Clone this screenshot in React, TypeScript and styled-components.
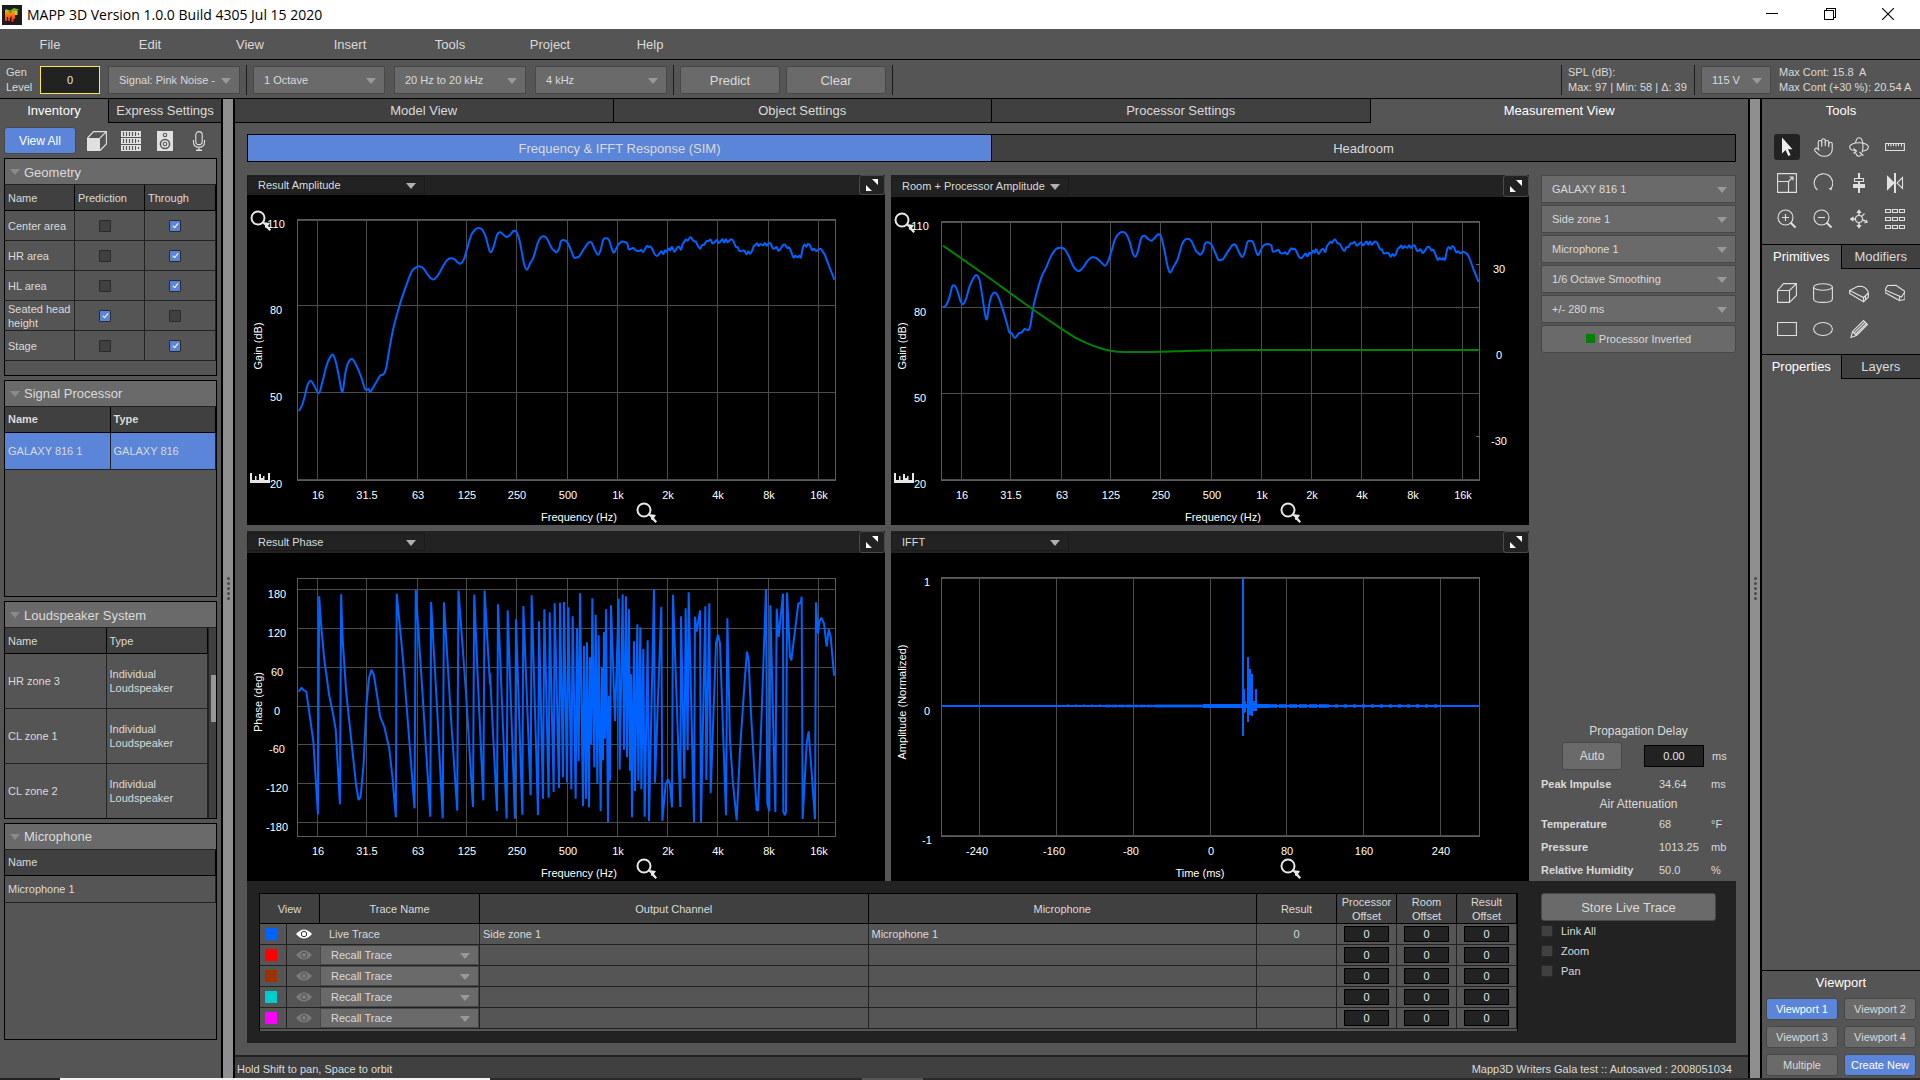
import React from "react";
import styled, { createGlobalStyle, css } from "styled-components";
import { Hand } from "lucide-react";

/* ---------- theme ---------- */

const c = {
  panel: "#555555",
  dark: "#404040",
  darker: "#222222",
  raised: "#6a6a6a",
  edge: "#484848",
  text: "#dadada",
  blue: "#5a85d8",
  trace: "#0062ff",
  grid: "#4c4c4c",
};

const GlobalStyle = createGlobalStyle`
  *, *::before, *::after { box-sizing: border-box; }
  body { margin: 0; background: ${c.panel}; }
  body, button, input, select, table {
    font-family: "Liberation Sans", Arial, Helvetica, sans-serif;
    font-size: 11px;
    color: ${c.text};
  }
  button, input, select { margin: 0; padding: 0; outline: none; }
`;

const Shell = styled.div`
  display: flex;
  flex-direction: column;
  height: 100vh;
  min-height: 760px;
  overflow: hidden;
`;

/* ---------- shared controls ---------- */

const Button = styled.button<{ $active?: boolean; $size?: number; $w?: string; $h?: number }>`
  width: ${(p) => p.$w ?? "auto"};
  height: ${(p) => p.$h ?? 28}px;
  border: 1px solid ${c.edge};
  border-radius: 3px;
  background: ${(p) => (p.$active ? c.blue : c.raised)};
  color: ${(p) => (p.$active ? "#fff" : c.text)};
  font-size: ${(p) => p.$size ?? 13}px;
  white-space: nowrap;
`;

const SelectWrap = styled.div<{ $w: string; $h: number; $flat?: boolean }>`
  position: relative;
  width: ${(p) => p.$w};
  height: ${(p) => p.$h}px;
  &::after {
    content: "";
    position: absolute;
    right: 9px;
    top: 50%;
    margin-top: -2px;
    border: 5px solid transparent;
    border-top: 6px solid ${(p) => (p.$flat ? "#b0b0b0" : "#999")};
    border-bottom: 0;
    pointer-events: none;
  }
`;

const SelectBox = styled.select<{ $flat?: boolean }>`
  appearance: none;
  display: block;
  width: 100%;
  height: 100%;
  padding: 0 20px 0 10px;
  border: 1px solid ${(p) => (p.$flat ? "#1b1b1b" : c.edge)};
  border-radius: 0;
  background: ${(p) => (p.$flat ? c.darker : c.raised)};
  color: ${c.text};
`;

function Select(props: { label: string; value: string; w?: string; h?: number; flat?: boolean }) {
  return (
    <SelectWrap $w={props.w ?? "100%"} $h={props.h ?? 28} $flat={props.flat}>
      <SelectBox aria-label={props.label} $flat={props.flat} defaultValue={props.value}>
        <option>{props.value}</option>
      </SelectBox>
    </SelectWrap>
  );
}

const NumberBox = styled.input<{ $w: number; $h: number; $focus?: boolean }>`
  display: block;
  width: ${(p) => p.$w}px;
  height: ${(p) => p.$h}px;
  border: 1px solid ${(p) => (p.$focus ? "#ffe84a" : "#000")};
  background: ${c.darker};
  color: #e6e6e6;
  text-align: center;
`;

const Check = styled.input.attrs({ type: "checkbox" })`
  appearance: none;
  display: block;
  flex: none;
  width: 12px;
  height: 12px;
  border: 1px solid #2a2a2a;
  border-radius: 1px;
  background: ${c.dark};
  &:checked { background: ${c.blue}; }
  &:checked::after {
    content: "";
    display: block;
    width: 3px;
    height: 6px;
    margin: 1px 0 0 4px;
    border: solid #fff;
    border-width: 0 1px 1px 0;
    transform: rotate(40deg);
  }
`;

const IconButton = styled.button<{ $w: number; $h: number; $on?: boolean }>`
  display: flex;
  align-items: center;
  justify-content: center;
  width: ${(p) => p.$w}px;
  height: ${(p) => p.$h}px;
  border: 0;
  border-radius: 3px;
  background: ${(p) => (p.$on ? c.darker : "transparent")};
  color: #e0e0e0;
`;

const Gap = styled.div<{ $w: number }>`
  flex: 0 0 ${(p) => p.$w}px;
`;

/* ---------- title bar, menu, toolbar ---------- */

const TitleBar = styled.header`
  display: flex;
  align-items: center;
  gap: 5px;
  flex: none;
  height: 29px;
  padding: 0 3px 0 2px;
  background: #fff;
`;

const Title = styled.h1`
  flex: 1;
  margin: 0;
  font: 400 14px/20px "Open Sans", "Noto Sans", sans-serif;
  color: #000;
`;

const WindowButton = styled.button`
  width: 58px;
  height: 28px;
  border: 0;
  background: none;
  color: #000;
`;

const MenuBar = styled.nav`
  display: flex;
  flex: none;
  height: 31px;
  border-bottom: 1px solid #000;
`;

const MenuItem = styled.button`
  width: 100px;
  border: 0;
  background: none;
  font-size: 13px;
`;

const Toolbar = styled.div`
  display: flex;
  align-items: flex-start;
  flex: none;
  height: 39px;
  padding: 6px 8px 0 6px;
  border-bottom: 1px solid #000;
`;

const Row = styled.div<{ $gap: number }>`
  display: flex;
  gap: ${(p) => p.$gap}px;
`;

const Separator = styled.div`
  width: 1px;
  height: 30px;
  margin: -1px 6px 0;
  background: #1a1a1a;
`;

const TwoLines = styled.div<{ $w: number }>`
  width: ${(p) => p.$w}px;
  margin-top: -1px;
  line-height: 15px;
  white-space: pre;
`;

const Spring = styled.div`
  flex: 1;
`;

/* ---------- body skeleton ---------- */

const Body = styled.div`
  display: grid;
  grid-template-columns: 221px 14px minmax(0, 1fr) 14px 158px;
  flex: 1;
  min-height: 0;
`;

const Splitter = styled.div`
  display: flex;
  flex-direction: column;
  align-items: center;
  justify-content: center;
  gap: 2px;
  border: solid #000;
  border-width: 0 2px;
  background: #8f8f8f;
`;

const Dot = styled.i`
  width: 3px;
  height: 3px;
  border-radius: 2px;
  background: #4a4a4a;
`;

const Tabs = styled.div<{ $topLine?: boolean }>`
  display: flex;
  flex: none;
  height: ${(p) => (p.$topLine ? 25 : 24)}px;
  ${(p) => p.$topLine && "border-top: 1px solid #000;"}
`;

const Tab = styled.button<{ $on?: boolean; $w?: string; $side?: "left" | "right" }>`
  flex: ${(p) => (p.$w ? `0 0 ${p.$w}` : "1 1 0")};
  min-width: 0;
  border: 0;
  background: transparent;
  color: #fff;
  font-size: 13px;
  white-space: nowrap;
  ${(p) =>
    p.$on
      ? "padding-bottom: 1px;"
      : css`
          border-bottom: 1px solid #000;
          border-${p.$side ?? "left"}: 1px solid #000;
          background: ${c.dark};
          color: ${c.text};
        `}
`;

/* ---------- left panel ---------- */

const Side = styled.aside`
  display: flex;
  flex-direction: column;
  min-width: 0;
  min-height: 0;
`;

const FilterRow = styled.div`
  display: flex;
  align-items: center;
  flex: none;
  padding: 4px 4px;
`;

const PanelStack = styled.div`
  display: flex;
  flex-direction: column;
  gap: 4px;
  flex: 1;
  min-height: 0;
  padding: 0 4px 38px;
`;

const Panel = styled.section`
  display: flex;
  flex-direction: column;
  flex: 1 1 0;
  min-height: 0;
  overflow: hidden;
  border: 1px solid #000;
`;

const PanelTitle = styled.h2`
  display: flex;
  align-items: center;
  gap: 4px;
  flex: none;
  height: 26px;
  margin: 0;
  padding: 1px 0 0 5px;
  border-bottom: 1px solid ${c.darker};
  background: ${c.raised};
  font-size: 13px;
  font-weight: 400;
  &::before {
    content: "";
    border: 5px solid transparent;
    border-top: 6px solid #8a8a8a;
    border-bottom: 0;
  }
`;

const PanelBody = styled.div`
  display: flex;
  align-items: flex-start;
  flex: 1;
  min-height: 0;
  overflow: hidden;
`;

const ListTable = styled.table<{ $row: number; $bold?: boolean }>`
  flex: 1;
  width: 100%;
  border-collapse: separate;
  border-spacing: 0;
  table-layout: fixed;
  th, td {
    padding: 0 3px;
    text-align: left;
    line-height: 14px;
    border: solid ${c.darker};
    border-width: 0 1px 1px 0;
  }
  th {
    height: 26px;
    background: ${c.dark};
    border-color: #000;
    font-weight: ${(p) => (p.$bold ? 700 : 400)};
  }
  td { height: ${(p) => p.$row}px; }
  tr[aria-selected="true"] td { background: ${c.blue}; }
`;

const CheckCell = styled.td`
  && { padding: 0 0 0 24px; }
`;

const ScrollTrack = styled.div`
  display: flex;
  flex-direction: column;
  align-self: stretch;
  width: 8px;
  padding: 47px 0 0 2px;
  background: ${c.dark};
  border-left: 1px solid ${c.darker};
`;

const ScrollThumb = styled.div`
  height: 47px;
  background: #999;
`;

/* ---------- centre ---------- */

const Center = styled.main`
  display: flex;
  flex-direction: column;
  min-width: 0;
  min-height: 0;
`;

const Content = styled.div`
  display: flex;
  flex-direction: column;
  flex: 1;
  min-height: 0;
  padding: 11px 12px 12px;
`;

const SubTabs = styled.div`
  display: flex;
  flex: none;
  height: 28px;
  margin-bottom: 13px;
  border: 1px solid #000;
`;

const SubTab = styled.button<{ $on?: boolean }>`
  flex: 1;
  border: 0;
  border-right: ${(p) => (p.$on ? "1px solid #000" : "0")};
  background: ${(p) => (p.$on ? c.blue : c.dark)};
  font-size: 13px;
`;

const Workspace = styled.div`
  display: grid;
  grid-template-columns: minmax(0, 1fr) 195px;
  gap: 12px;
  flex: 1;
  min-height: 0;
`;

const Charts = styled.div`
  display: grid;
  grid-template: minmax(0, 1fr) minmax(0, 1fr) / minmax(0, 1fr) minmax(0, 1fr);
  gap: 6px;
  min-height: 0;
`;

const ChartCard = styled.section`
  display: flex;
  flex-direction: column;
  min-width: 0;
  min-height: 0;
  background: #000;
`;

const ChartHead = styled.div<{ $h: number }>`
  display: flex;
  align-items: center;
  justify-content: space-between;
  flex: none;
  height: ${(p) => p.$h}px;
  background: ${c.darker};
`;

const Expand = styled.button`
  display: flex;
  align-items: center;
  justify-content: center;
  width: 26px;
  height: 100%;
  border: 1px solid #4a4a4a;
  border-radius: 3px;
  background: ${c.darker};
`;

const Plot = styled.svg`
  display: block;
  flex: 1;
  width: 100%;
  min-height: 0;
  text {
    fill: #fff;
    font-size: 11px;
    text-anchor: middle;
  }
`;

const Settings = styled.div`
  display: flex;
  flex-direction: column;
  gap: 2px;
  min-height: 0;
`;

const Swatch = styled.i<{ $color: string; $size?: number }>`
  display: inline-block;
  width: ${(p) => p.$size ?? 9}px;
  height: ${(p) => p.$size ?? 9}px;
  background: ${(p) => p.$color};
`;

const SettingLabel = styled.span`
  display: inline-flex;
  align-items: center;
  gap: 4px;
`;

const Delay = styled.div`
  display: flex;
  flex-direction: column;
  margin-top: auto;
`;

const DelayTitle = styled.div<{ $h: number }>`
  height: ${(p) => p.$h}px;
  font-size: 12px;
  line-height: ${(p) => p.$h}px;
  text-align: center;
`;

const DelayControls = styled.div`
  display: flex;
  align-items: center;
  padding-left: 21px;
`;

const DelayInput = styled.label`
  display: flex;
  align-items: center;
  gap: 8px;
  margin-left: 22px;
`;

const Reading = styled.div<{ $h: number }>`
  display: grid;
  grid-template-columns: 118px 52px 1fr;
  align-items: center;
  height: ${(p) => p.$h}px;
  padding-top: 1px;
`;

const TracePanel = styled.section`
  display: grid;
  grid-template-columns: minmax(0, 1fr) 195px;
  gap: 23px;
  align-items: start;
  flex: none;
  height: 162px;
  padding: 12px 0 0 12px;
  background: ${c.darker};
`;

const TraceFrame = styled.div`
  height: 138px;
  border: 1px solid #000;
  border-bottom: 0;
  background: linear-gradient(${c.panel}, ${c.panel}) 0 0 / 100% 137px no-repeat;
`;

const TraceTable = styled.table`
  width: 100%;
  border-collapse: separate;
  border-spacing: 0;
  table-layout: fixed;
  th, td {
    padding: 0;
    border: solid ${c.darker};
    border-width: 0 1px 1px 0;
  }
  th {
    height: 30px;
    border-color: #000;
    background: ${c.dark};
    font-weight: 400;
    line-height: 14px;
  }
  td { height: 21px; }
`;

const Td = styled.td<{ $pad?: number; $center?: boolean; $open?: boolean }>`
  && {
    padding-left: ${(p) => p.$pad ?? 0}px;
    text-align: ${(p) => (p.$center ? "center" : "left")};
    ${(p) => p.$open && "border-right: 0;"}
  }
  & > svg, & > i { display: block; }
  & > input { margin: 0 auto; }
`;

const Options = styled.div`
  display: flex;
  flex-direction: column;
  align-items: flex-start;
`;

const Option = styled.label`
  display: flex;
  align-items: center;
  gap: 8px;
  height: 20px;
`;

const StatusBar = styled.footer`
  display: flex;
  align-items: center;
  justify-content: space-between;
  flex: none;
  height: 23px;
  padding: 3px 16px 0 2px;
  border-top: 2px solid ${c.darker};
  background: ${c.dark};
`;

const ScreenEdge = styled.div`
  flex: none;
  height: 2px;
  background: linear-gradient(
    90deg,
    ${c.darker} 60px,
    #f4f4f4 60px 490px,
    #2a2a2a 490px 862px,
    ${c.panel} 862px 923px,
    #2a2a2a 923px
  );
`;

/* ---------- right panel ---------- */

const SideTitle = styled.h2`
  margin: 0;
  color: #fff;
  font-size: 13px;
  font-weight: 400;
  line-height: 24px;
  text-align: center;
`;

const IconGrid = styled.div`
  display: grid;
  grid-template-columns: repeat(4, 36px);
  grid-auto-rows: 36px;
  place-items: center;
  justify-content: center;
  padding: 6px 0 7px;
`;

const ViewportBox = styled.section`
  margin-top: auto;
  padding: 0 4px 2px;
  border-top: 1px solid #000;
`;

const ViewportGrid = styled.div`
  display: grid;
  grid-template-columns: 1fr 1fr;
  gap: 6px;
  padding-top: 3px;
`;

/* ---------- icons ---------- */

const Glyph = (p: { children: React.ReactNode }) => (
  <svg width="20" height="20" viewBox="0 0 20 20" fill="none" stroke="#e0e0e0" strokeWidth="1.1">
    {p.children}
  </svg>
);

const toolIcons: [string, React.ReactNode][] = [
  ["Select", <Glyph><path d="M5 0.5V16.5L8.6 13L11.3 19L13.6 18L11 12.2H15.5Z" fill="#eee" stroke="none" /></Glyph>],
  ["Pan", <Hand size={21} strokeWidth={1.3} />],
  ["Orbit", <Glyph><path d="M7 14C3 13.4 .6 12 .6 10C.6 7.5 4.800 5.800 10 5.800S19.400 7.500 19.400 10C19.400 12 17 13.500 14 14" /><path d="M6.500 6C7 3 8.200 .8 10 .8C12.500 .8 14 5 14 10C14 12 13.600 14 13 15.500M6.500 15.500C7.300 18 8.500 19.300 10 19.300C11 19.300 12 18.700 12.600 17.600" /><path d="M4.500 11.500L7.500 14L4.500 16.500M14.500 18.500L12.500 17L10.500 15" /></Glyph>],
  ["Measure", <Glyph><path d="M.6 6.500H19.400V13.500H.6ZM3.500 7V9M6 7V9.500M8.500 7V9M11 7V9.500M13.500 7V9M16.500 7V9.500" /></Glyph>],
  ["Scale", <Glyph><path d="M.6 .6H19.400V19.400H.6ZM.6 8.500H11.500V19.400M11.500 8.500L16 4M12.500 4H16V7.500" /></Glyph>],
  ["Rotate", <Glyph><path d="M4.500 17.200A9.300 9.300 0 1 1 18.200 15.200" /><path d="M15.500 15.500L18.300 17.500L19.200 14.200Z" fill="#e0e0e0" stroke="none" /></Glyph>],
  ["Align", <Glyph><path d="M10 0V5M10 9V20" strokeWidth="2" /><path d="M5.500 5.500H14.500V8.500H5.500Z" /><path d="M4 11H16V15H4Z" fill="#e0e0e0" stroke="none" /></Glyph>],
  ["Mirror", <Glyph><path d="M10 0V20" strokeWidth="2" /><path d="M2.500 3.500L9 10L2.500 16.500Z" fill="#e0e0e0" /><path d="M17.500 4.500L12 10L17.500 15.500Z" /></Glyph>],
  ["Zoom in", <Glyph><circle cx="8.500" cy="8.500" r="7.500" /><path d="M8.500 5V12M5 8.500H12" /><path d="M13.500 13.500L18.500 18.500" strokeWidth="2" /></Glyph>],
  ["Zoom out", <Glyph><circle cx="8.500" cy="8.500" r="7.500" /><path d="M5 8.500H12" /><path d="M13.500 13.500L18.500 18.500" strokeWidth="2" /></Glyph>],
  ["Move", <Glyph><circle cx="10" cy="10" r="3.500" /><path d="M10 6.500V2M10 13.500V18M6.500 10H1.500M13.500 11L16.500 12" strokeWidth="1.500" /><path d="M10 .3L12.700 4H7.300ZM10 19.700L12.700 16H7.300ZM.8 10L4.500 7.300V12.700ZM17.500 10.500L15 14.500L19 13.500Z" fill="#e0e0e0" stroke="none" /><path d="M12.500 7.500L15.500 4.500" /></Glyph>],
  ["Array", <Glyph><path d="M.5 .5H5.500V3.500H.5ZM7.500 .5H12.500V3.500H7.500ZM14.500 .5H19.500V3.500H14.500ZM.5 8.500H5.500V11.500H.5ZM7.500 8.500H12.500V11.500H7.500ZM14.500 8.500H19.500V11.500H14.500ZM.5 16.500H5.500V19.500H.5ZM7.500 16.500H12.500V19.500H7.500ZM14.500 16.500H19.500V19.500H14.500Z" /></Glyph>],
];

const primitiveIcons: [string, React.ReactNode][] = [
  ["Box", <Glyph><path d="M.6 7.500H12.500V19.400H.6ZM.6 7.500L6.500 .6H19.400L12.500 7.500M19.400 .6V12.500L12.500 19.400" /></Glyph>],
  ["Cylinder", <Glyph><ellipse cx="10" cy="4" rx="9.400" ry="3.300" /><path d="M.6 4V16C.6 18 4.500 19.400 10 19.400S19.400 18 19.400 16V4" /></Glyph>],
  ["Wedge", <Glyph><path d="M.6 7.500L9 3.200L13.500 3.500Q18.500 5.500 19.400 10L14.500 14.500ZM.6 7.500V10.500L14.500 18.800V14.500M14.500 18.800L19.400 14V10M16.500 13V16.500" /></Glyph>],
  ["Ramp", <Glyph><path d="M0 7L2.500 2.500L11 2.200L20 8.500L16.500 14ZM0 7V9.500L14.500 17.500V13.500M14.500 17.500L20 16.500V8.500" /></Glyph>],
  ["Rectangle", <Glyph><path d="M.6 3.500H19.400V16.500H.6Z" /></Glyph>],
  ["Ellipse", <Glyph><ellipse cx="10" cy="10" rx="9.400" ry="6.500" /></Glyph>],
  ["Draw", <Glyph><path d="M2 18.500L3.500 12.500L14.500 1.500L18.500 5.500L7.500 16.500ZM3.500 12.500L7.500 16.500M5 14L16 3M6.500 15.500L17.500 4.500" /></Glyph>],
];

const filterIcons: [string, React.ReactNode][] = [
  ["Geometry", <Glyph><path d="M0 7H13V20H0Z" fill="#e0e0e0" stroke="none" /><path d="M.5 7L6.500 .6H19.400L13 7M19.400 .6V13L13 19.500" /></Glyph>],
  ["Processors", <Glyph><path d="M0 0H20V6H0ZM0 7H20V13H0ZM0 14H20V20H0Z" fill="#e0e0e0" stroke="none" /><path d="M2.500 1V5M5.500 1V5M8.500 1V5M11.500 1V5M14.500 1V5M2.500 8V12M5.500 8V12M8.500 8V12M11.500 8V12M14.500 8V12M2.500 15V19M5.500 15V19M8.500 15V19M11.500 15V19M14.500 15V19M17.500 2V4M17.500 9V11M17.500 16V18" stroke="#555" /></Glyph>],
  ["Loudspeakers", <Glyph><path d="M2 0H18V20H2Z" fill="#e0e0e0" stroke="none" /><circle cx="10" cy="4" r="1.700" stroke="#555" /><circle cx="10" cy="13" r="4.600" stroke="#555" strokeWidth="1.500" /><circle cx="10" cy="13" r="1.800" stroke="#555" /></Glyph>],
  ["Microphones", <Glyph><rect x="6.800" y=".6" width="6.400" height="13" rx="3.200" /><path d="M4.500 9V11C4.500 14.500 7 16.200 10 16.200S15.500 14.500 15.500 11V9M10 16.200V19" /><path d="M7 19.300H13" strokeWidth="1.500" /></Glyph>],
];

const Eye = ({ on }: { on?: boolean }) => (
  <svg width="16" height="10" viewBox="0 0 16 10">
    <path d="M0 5Q8 -4 16 5Q8 14 0 5Z" fill={on ? "#fff" : "#7a7a7a"} />
    <circle cx="8" cy="5" r="2.700" fill="none" stroke={on ? "#333" : "#555"} />
  </svg>
);

const Logo = () => (
  <svg width="20" height="20" viewBox="0 0 20 20">
    <defs>
      <linearGradient id="drip" x1="0" y1="0" x2="0" y2="1">
        <stop offset="0" stopColor="#ffb400" />
        <stop offset="1" stopColor="#e8231a" />
      </linearGradient>
    </defs>
    <path d="M0 0H20V20H0Z" fill="#1c1c1c" />
    <path d="M3 5H6L8 8L11 5H13V14H11.500V17H9.500V11L8 13V16H6V12H5V16H3Z" fill="url(#drip)" />
    <path d="M3 3.500L8 5.500L12 3L17 4.500L15 6H10L8 7.500L5 5.500Z" fill="#5fb336" />
    <path d="M13 6H15.500V10H13Z" fill="#c8d22e" />
  </svg>
);

/* ---------- chart data ---------- */

type Pt = [number, number];

const parse = (s: string): Pt[] => s.trim().split(/\s+/).map((p) => p.split(",").map(Number) as Pt);

/* Catmull-Rom spline through the samples. */
const smooth = (pts: Pt[]) => {
  let d = `M${pts[0][0]} ${pts[0][1]}`;
  for (let i = 0; i < pts.length - 1; i++) {
    const p0 = pts[Math.max(0, i - 1)];
    const p1 = pts[i];
    const p2 = pts[i + 1];
    const p3 = pts[Math.min(pts.length - 1, i + 2)];
    d += `C${p1[0] + (p2[0] - p0[0]) / 6} ${p1[1] + (p2[1] - p0[1]) / 6} ${p2[0] - (p3[0] - p1[0]) / 6} ${
      p2[1] - (p3[1] - p1[1]) / 6
    } ${p2[0]} ${p2[1]}`;
  }
  return d;
};

/* The high band carries fine ripple between the main samples. */
const ripple = (pts: Pt[]): Pt[] => {
  const out: Pt[] = [];
  pts.forEach((p, i) => {
    out.push(p);
    const n = pts[i + 1];
    if (!n || p[0] < 950 || p[0] > 1405) return;
    const steps = Math.floor((n[0] - p[0]) / 4);
    for (let k = 1; k < steps; k++) {
      const t = k / steps;
      out.push([p[0] + (n[0] - p[0]) * t, p[1] + (n[1] - p[1]) * t + (k % 2 ? -5 : 5)]);
    }
  });
  return out;
};

const highBand = parse(`752,235 758,242 763,247 770,235 774,214 781,210 790,218 800,245 806,263 813,262 818,260
828,240 840,219 848,218 856,240 864,254 870,240 876,210 883,205 890,210 898,240 903,247 912,225 918,217 926,215
934,220 938,238 948,234 956,242 963,243 972,246 978,235 986,231 995,238 1000,252 1006,258 1012,250 1030,245
1042,231 1048,245 1055,232 1064,239 1072,215 1080,212 1087,201 1094,213 1104,226 1110,236 1120,224 1130,213
1145,216 1160,213 1180,212 1190,213 1196,230 1205,243 1212,242 1222,253 1235,243 1243,226 1255,222 1262,226
1275,220 1290,235 1303,238 1310,225 1320,234 1328,240 1335,262 1345,262 1353,262 1358,232 1370,222 1380,240
1390,243 1396,238 1406,245 1412,258 1420,285 1428,310 1434,329`);

const resultAmplitude = [
  ...parse(`142,723 150,705 157,675 163,645 171,632 178,645 190,669 198,640 208,590 216,565 224,554 231,575 238,615
247,666 254,610 261,578 270,567 278,580 292,620 302,658 310,657 315,664 328,638 338,617 345,614 352,598 360,540
370,475 384,410 400,350 414,305 424,293 432,289 442,295 452,312 460,325 468,328 478,315 490,288 500,270 508,265
518,268 525,277 532,281 540,268 548,235 558,195 568,178 577,174 585,180 594,205 600,235 605,247 612,230 620,195
628,187 636,195 644,201 652,194 660,183 667,186 675,215 685,280 692,299 700,280 708,262 718,220 725,203 733,199
741,207`),
  ...highBand,
];

const roomAmplitude = [
  ...parse(`152,412 160,405 168,380 174,350 180,347 186,360 195,395 201,402 208,385 216,350 224,328 232,315 240,330
247,380 253,430 258,447 264,400 270,375 278,368 286,382 298,425 306,460 312,487 318,490 325,504 335,490 342,487
349,477 358,480 363,465 370,410 380,360 390,320 400,295 412,260 424,238 434,233 444,236 454,255 466,288 474,300
480,303 490,293 498,277 508,264 516,262 526,268 536,280 543,287 550,275 558,245 568,205 578,189 586,186 594,192
602,215 610,250 616,260 622,245 630,205 638,197 646,206 655,212 663,203 671,193 678,200 686,240 695,295 701,307
708,290 718,268 728,225 735,210 743,206 751,213`),
  ...highBand.map(([x, y]): Pt => [x + 10, y + 7]),
];

const processorCurve = parse(
  "152,227 250,312 315,370 371,420 437,476 470,502 500,520 530,534 560,543 600,546 676,545 760,542 900,540 1446,540"
);

const phaseLow = `142,500 148,488 153,495 160,500 168,570 177,650 188,868 191,214 195,290 203,400 215,510 225,570
231,615 241,838 244,208 247,330 256,500 268,640 280,780 286,825 291,815 298,720 305,540 311,460 317,434 323,450
333,530 338,575 348,605 360,670 368,760 376,877 378,206 393,400 408,640 421,850 424,195 440,500 459,875 461,231
475,540 489,880 492,232 508,560 524,857 527,197 545,500 562,846 565,209 575,500 587,826 590,197 603,478`;

const phaseHigh = `0,280 21,693 24,73 50,716 53,91 75,716 78,118 97,704 100,78 122,646 125,46 144,705 147,124 159,656
163,88 176,653 179,97 191,636 194,70 207,624 210,68 219,592 222,66 231,607 235,82 244,628 248,109 257,656 261,145
266,544 270,40 279,678 282,198 288,656 291,187 297,682 300,232 304,493 307,55 313,562 317,104 322,611 326,166
332,694 336,262 339,541 342,156 345,476 348,88 354,726 357,347 360,602 363,76 375,424 386,56 389,569 398,43
402,509 408,49 411,532 417,88 420,572 423,283 426,712 432,184 435,633 442,133 445,602 451,142 454,628 460,207
464,710 473,181 477,724 492,28 495,608 514,80 517,723 527,612 534,598 540,612 546,682 549,44 571,681 573,109
583,596 587,85 593,510 596,37 612,727 615,110 620,155 630,91 633,727 646,79 649,600 658,70 662,640 678,190
684,164 690,190 708,706 712,115 720,480 728,600 740,721 750,510 765,290 771,215 776,240 783,400 800,690 804,692
815,400 828,28 832,670 838,694 841,76 856,696 860,86 866,171 879,41 880,695 885,706 888,695 891,38 900,230
904,241 914,160 925,70 932,70 935,50 938,717 950,490 956,454 975,718 978,67 984,160 988,125 994,113 1002,130
1010,200 1016,148 1022,170 1032,284 1036,284`;

const frequencyAxis: [number, string][] = [
  [70, "16"], [119, "31.5"], [170, "63"], [219, "125"], [269, "250"], [320, "500"],
  [370, "1k"], [420, "2k"], [470, "4k"], [521, "8k"], [571, "16k"],
];

const timeAxis: [number, string][] = [
  [88, "-240"], [165, "-160"], [242, "-80"], [319, "0"], [395, "80"], [472, "160"], [549, "240"],
];

const Lens = ({ x, y }: { x: number; y: number }) => (
  <g transform={`translate(${x} ${y})`}>
    <circle r="6.500" fill="none" stroke="#e6e6e6" strokeWidth="2" />
    <path d="M3.500 4.500L5 4L12 5L10 8L13 11.500L11.500 13L8.500 10L7 9.500L7 7.500Z" fill="#e6e6e6" />
  </g>
);

const Ruler = ({ x, y }: { x: number; y: number }) => (
  <path
    transform={`translate(${x} ${y})`}
    d="M0 0H2V7H5V3H6.500V7H9V1H11V5H13V3H14.500V7H18V0H20V10H0Z"
    fill="#e6e6e6"
  />
);

type ChartProps = {
  name: string;
  head: number;
  top: number;
  bottom: number;
  rows: { y: number; at: number; label: string }[];
  cols: [number, string][];
  labelX: number;
  xTitle: string;
  xTitleAt: number;
  yTitle: string;
  children: React.ReactNode;
};

function Chart(p: ChartProps) {
  return (
    <ChartCard>
      <ChartHead $h={p.head}>
        <Select label={`${p.name} view`} value={p.name} w="178px" h={18} flat />
        <Expand aria-label={`Expand ${p.name}`}>
          <svg width="14" height="14" viewBox="0 0 14 14" fill="#fff">
            <path d="M7 1H13V7ZM1 7V13H7Z" />
          </svg>
        </Expand>
      </ChartHead>
      <Plot viewBox={`0 ${p.head} 638 ${350 - p.head}`}>
        <g stroke={c.grid} fill="none" shapeRendering="crispEdges">
          {p.rows.map((r) => (
            <path key={r.label} d={`M50 ${r.y}.5H589`} />
          ))}
          {p.cols.map(([x]) => (
            <path key={x} d={`M${x}.5 ${p.top}V${p.bottom}`} />
          ))}
          <rect x="50.500" y={p.top + 0.5} width="538" height={p.bottom - p.top} stroke="#5c5c5c" />
        </g>
        {p.children}
        {p.rows.map((r) => (
          <text key={r.label} x={p.labelX} y={r.at + 4}>{r.label}</text>
        ))}
        {p.cols.map(([x, label]) => (
          <text key={label} x={x + (label.startsWith("-") ? -2 : 1)} y="324">{label}</text>
        ))}
        <text x={p.xTitleAt} y="346">{p.xTitle}</text>
        <text transform="translate(15 171) rotate(-90)">{p.yTitle}</text>
      </Plot>
    </ChartCard>
  );
}

const line = { fill: "none", stroke: c.trace, strokeWidth: 2, vectorEffect: "non-scaling-stroke" } as const;

function ChartArea() {
  return (
    <Charts>
      <Chart
        name="Result Amplitude" head={20} top={44} bottom={305} cols={frequencyAxis} labelX={29}
        rows={[{ y: 45, at: 49, label: "110" }, { y: 130, at: 135, label: "80" }, { y: 217, at: 222, label: "50" }, { y: 304, at: 309, label: "20" }]}
        xTitle="Frequency (Hz)" xTitleAt={332} yTitle="Gain (dB)"
      >
        <path d={smooth(ripple(resultAmplitude))} transform="translate(-7 -5) scale(.41454 .33333)" {...line} />
        <Lens x={11} y={43} />
        <Lens x={397} y={335} />
        <Ruler x={3} y={298} />
      </Chart>
      <Chart
        name="Room + Processor Amplitude" head={22} top={46} bottom={305} cols={frequencyAxis} labelX={29}
        rows={[{ y: 47, at: 51, label: "110" }, { y: 132, at: 137, label: "80" }, { y: 218, at: 223, label: "50" }, { y: 304, at: 309, label: "20" }]}
        xTitle="Frequency (Hz)" xTitleAt={332} yTitle="Gain (dB)"
      >
        <path d={smooth(ripple(roomAmplitude))} transform="translate(-11 -5) scale(.41454 .33333)" {...line} />
        <path d={smooth(processorCurve)} transform="translate(-11 -5) scale(.41454 .33333)" {...line} stroke="#008200" />
        <path d="M585 89.500H589M585 261.500H589" stroke="#666" />
        <text x="608" y="98">30</text>
        <text x="608" y="184">0</text>
        <text x="608" y="270">-30</text>
        <Lens x={11} y={45} />
        <Lens x={397} y={335} />
        <Ruler x={3} y={298} />
      </Chart>
      <Chart
        name="Result Phase" head={22} top={47} bottom={305} cols={frequencyAxis} labelX={30}
        rows={[
          { y: 58, at: 63, label: "180" }, { y: 97, at: 102, label: "120" }, { y: 136, at: 141, label: "60" },
          { y: 175, at: 180, label: "0" }, { y: 213, at: 218, label: "-60" }, { y: 252, at: 257, label: "-120" },
          { y: 291, at: 296, label: "-180" },
        ]}
        xTitle="Frequency (Hz)" xTitleAt={332} yTitle="Phase (deg)"
      >
        <polyline points={phaseLow} transform="translate(-7 -6) scale(.41454 .33333)" {...line} strokeLinejoin="bevel" />
        <polyline points={phaseHigh} transform="translate(243 49) scale(.33333)" {...line} strokeLinejoin="bevel" />
        <Lens x={397} y={335} />
      </Chart>
      <Chart
        name="IFFT" head={22} top={46} bottom={305} cols={timeAxis} labelX={36}
        rows={[{ y: 47, at: 51, label: "1" }, { y: 175, at: 180, label: "0" }, { y: 304, at: 309, label: "-1" }]}
        xTitle="Time (ms)" xTitleAt={309} yTitle="Amplitude (Normalized)"
      >
        <path d="M50 175H589" {...line} />
        <path d="M176 174.500H214" {...line} strokeWidth={3} strokeDasharray="2 6" opacity=".5" />
        <path d="M214 175H264" {...line} strokeWidth={3} strokeDasharray="5 2" opacity=".6" />
        <path d="M264 175H312" {...line} strokeWidth={3} opacity=".8" />
        <path d="M312 175H378" {...line} strokeWidth={4} />
        <path d="M378 175H435" {...line} strokeWidth={4} strokeDasharray="8 2" opacity=".8" />
        <path d="M435 175H552" {...line} strokeWidth={4} strokeDasharray="3 6" opacity=".7" />
        <path d="M352 47V205M353 158V182M357 126V191M359 138V184M361 143V185M365 158V180M354 170V181M363 170V180" {...line} />
        <Lens x={397} y={335} />
      </Chart>
    </Charts>
  );
}

/* ---------- page data ---------- */

const menus = ["File", "Edit", "View", "Insert", "Tools", "Project", "Help"];

const geometry: [string, boolean, boolean][] = [
  ["Center area", false, true],
  ["HR area", false, true],
  ["HL area", false, true],
  ["Seated head height", true, false],
  ["Stage", false, true],
];

const loudspeakers = ["HR zone 3", "CL zone 1", "CL zone 2"];

const traces = [
  { color: "#0062ff", live: true },
  { color: "#ff0000" },
  { color: "#993300" },
  { color: "#00cccc" },
  { color: "#ff00ff" },
];

const readings = [
  ["Temperature", "68", "°F"],
  ["Pressure", "1013.25", "mb"],
  ["Relative Humidity", "50.0", "%"],
];

const viewports = ["Viewport 1", "Viewport 2", "Viewport 3", "Viewport 4", "Multiple", "Create New"];

/* ---------- sections ---------- */

function TopBars() {
  return (
    <>
      <TitleBar>
        <Logo />
        <Title>MAPP 3D Version 1.0.0 Build 4305 Jul 15 2020</Title>
        <Row $gap={0}>
          <WindowButton aria-label="Minimize">
            <svg width="12" height="12" viewBox="0 0 12 12" stroke="#000" shapeRendering="crispEdges"><path d="M0 5.500H12" /></svg>
          </WindowButton>
          <WindowButton aria-label="Restore">
            <svg width="12" height="12" viewBox="0 0 12 12" fill="none" stroke="#000" shapeRendering="crispEdges"><path d="M.5 2.500H9.500V11.500H.5ZM2.500 2.500V.5H11.500V9.500H9.500" /></svg>
          </WindowButton>
          <WindowButton aria-label="Close">
            <svg width="12" height="12" viewBox="0 0 12 12" stroke="#000" strokeWidth="1.100"><path d="M0 0L12 12M12 0L0 12" /></svg>
          </WindowButton>
        </Row>
      </TitleBar>
      <MenuBar>
        {menus.map((m) => <MenuItem key={m}>{m}</MenuItem>)}
      </MenuBar>
      <Toolbar>
        <TwoLines as="label" htmlFor="gen" $w={34}>{"Gen\nLevel"}</TwoLines>
        <NumberBox id="gen" $w={60} $h={28} $focus defaultValue="0" />
        <Gap $w={8} />
        <Select label="Signal" value="Signal: Pink Noise -" w="132px" />
        <Separator />
        <Row $gap={9}>
          <Select label="Bandwidth" value="1 Octave" w="132px" />
          <Select label="Range" value="20 Hz to 20 kHz" w="132px" />
          <Select label="Frequency" value="4 kHz" w="132px" />
        </Row>
        <Separator />
        <Row $gap={6}>
          <Button $w="100px">Predict</Button>
          <Button $w="100px">Clear</Button>
        </Row>
        <Separator />
        <Spring />
        <Separator />
        <TwoLines $w={120}>{"SPL (dB):\nMax: 97 | Min: 58 | Δ: 39"}</TwoLines>
        <Separator />
        <Select label="Voltage" value="115 V" w="70px" />
        <Gap $w={8} />
        <TwoLines $w={133}>{"Max Cont: 15.8  A\nMax Cont (+30 %): 20.54 A"}</TwoLines>
      </Toolbar>
    </>
  );
}

function Inventory() {
  return (
    <Side>
      <Tabs>
        <Tab $on $w="108px">Inventory</Tab>
        <Tab>Express Settings</Tab>
      </Tabs>
      <FilterRow>
        <Button $active $size={12} $w="72px" $h={27}>View All</Button>
        <Gap $w={4} />
        <Row $gap={0}>
          {filterIcons.map(([name, icon]) => (
            <IconButton key={name} aria-label={name} $w={34} $h={26}>{icon}</IconButton>
          ))}
        </Row>
      </FilterRow>
      <PanelStack>
        <Panel>
          <PanelTitle>Geometry</PanelTitle>
          <PanelBody>
            <ListTable $row={30}>
              <colgroup><col width="70" /><col width="70" /><col /></colgroup>
              <thead><tr><th>Name</th><th>Prediction</th><th>Through</th></tr></thead>
              <tbody>
                {geometry.map(([name, prediction, through]) => (
                  <tr key={name}>
                    <td>{name}</td>
                    <CheckCell><Check aria-label={`${name} prediction`} defaultChecked={prediction} /></CheckCell>
                    <CheckCell><Check aria-label={`${name} through`} defaultChecked={through} /></CheckCell>
                  </tr>
                ))}
              </tbody>
            </ListTable>
          </PanelBody>
        </Panel>
        <Panel>
          <PanelTitle>Signal Processor</PanelTitle>
          <PanelBody>
            <ListTable $row={37} $bold>
              <thead><tr><th>Name</th><th>Type</th></tr></thead>
              <tbody><tr aria-selected="true"><td>GALAXY 816 1</td><td>GALAXY 816</td></tr></tbody>
            </ListTable>
          </PanelBody>
        </Panel>
        <Panel>
          <PanelTitle>Loudspeaker System</PanelTitle>
          <PanelBody>
            <ListTable $row={55}>
              <thead><tr><th>Name</th><th>Type</th></tr></thead>
              <tbody>
                {loudspeakers.map((l) => (
                  <tr key={l}><td>{l}</td><td>Individual<br />Loudspeaker</td></tr>
                ))}
              </tbody>
            </ListTable>
            <ScrollTrack><ScrollThumb /></ScrollTrack>
          </PanelBody>
        </Panel>
        <Panel>
          <PanelTitle>Microphone</PanelTitle>
          <PanelBody>
            <ListTable $row={27}>
              <thead><tr><th>Name</th></tr></thead>
              <tbody><tr><td>Microphone 1</td></tr></tbody>
            </ListTable>
          </PanelBody>
        </Panel>
      </PanelStack>
    </Side>
  );
}

function MeasurementSettings() {
  return (
    <Settings>
      <Select label="Processor" value="GALAXY 816 1" />
      <Select label="Output" value="Side zone 1" />
      <Select label="Microphone" value="Microphone 1" />
      <Select label="Smoothing" value="1/6 Octave Smoothing" />
      <Select label="Time window" value="+/- 280 ms" />
      <Button $size={11} $w="100%">
        <SettingLabel><Swatch $color="#008200" />Processor Inverted</SettingLabel>
      </Button>
      <Delay>
        <DelayTitle $h={22}>Propagation Delay</DelayTitle>
        <DelayControls>
          <Button $size={12} $w="60px">Auto</Button>
          <DelayInput><NumberBox aria-label="Propagation delay" $w={60} $h={22} defaultValue="0.00" />ms</DelayInput>
        </DelayControls>
        <Reading $h={26}><b>Peak Impulse</b><span>34.64</span><span>ms</span></Reading>
        <DelayTitle $h={16}>Air Attenuation</DelayTitle>
        {readings.map(([k, v, u]) => (
          <Reading key={k} $h={23}><b>{k}</b><span>{v}</span><span>{u}</span></Reading>
        ))}
      </Delay>
    </Settings>
  );
}

function Traces() {
  return (
    <TracePanel>
      <TraceFrame>
        <TraceTable>
          <colgroup>
            <col width="27" /><col width="33" /><col width="160" /><col /><col />
            <col width="80" /><col width="60" /><col width="60" /><col width="60" />
          </colgroup>
          <thead>
            <tr>
              <th colSpan={2}>View</th><th>Trace Name</th><th>Output Channel</th><th>Microphone</th><th>Result</th>
              <th>Processor<br />Offset</th><th>Room<br />Offset</th><th>Result<br />Offset</th>
            </tr>
          </thead>
          <tbody>
            {traces.map((t) => (
              <tr key={t.color}>
                <Td $pad={5}><Swatch $color={t.color} $size={12} /></Td>
                <Td $pad={9} $open><Eye on={t.live} /></Td>
                {t.live ? <Td $pad={9}>Live Trace</Td> : <Td><Select label="Recall trace" value="Recall Trace" h={20} /></Td>}
                <Td $pad={3}>{t.live && "Side zone 1"}</Td>
                <Td $pad={3}>{t.live && "Microphone 1"}</Td>
                <Td $center>{t.live && "0"}</Td>
                {["Processor", "Room", "Result"].map((o) => (
                  <Td key={o}><NumberBox aria-label={`${o} offset`} $w={45} $h={16} defaultValue="0" /></Td>
                ))}
              </tr>
            ))}
          </tbody>
        </TraceTable>
      </TraceFrame>
      <Options>
        <Button $w="175px">Store Live Trace</Button>
        {["Link All", "Zoom", "Pan"].map((o) => (
          <Option key={o}><Check />{o}</Option>
        ))}
      </Options>
    </TracePanel>
  );
}

function ToolsPanel() {
  return (
    <Side>
      <SideTitle>Tools</SideTitle>
      <IconGrid>
        {toolIcons.map(([name, icon], i) => (
          <IconButton key={name} aria-label={name} $w={26} $h={26} $on={i === 0}>{icon}</IconButton>
        ))}
      </IconGrid>
      <Tabs $topLine><Tab $on>Primitives</Tab><Tab>Modifiers</Tab></Tabs>
      <IconGrid>
        {primitiveIcons.map(([name, icon]) => (
          <IconButton key={name} aria-label={name} $w={26} $h={26}>{icon}</IconButton>
        ))}
      </IconGrid>
      <Tabs $topLine><Tab $on>Properties</Tab><Tab>Layers</Tab></Tabs>
      <ViewportBox>
        <SideTitle>Viewport</SideTitle>
        <ViewportGrid>
          {viewports.map((v, i) => (
            <Button key={v} $size={11} $h={22} $active={i === 0 || i === 5}>{v}</Button>
          ))}
        </ViewportGrid>
      </ViewportBox>
    </Side>
  );
}

const SplitHandle = () => (
  <Splitter>
    {[0, 1, 2, 3, 4].map((i) => <Dot key={i} />)}
  </Splitter>
);

export default function App() {
  return (
    <Shell>
      <GlobalStyle />
      <TopBars />
      <Body>
        <Inventory />
        <SplitHandle />
        <Center>
          <Tabs>
            <Tab $side="right">Model View</Tab>
            <Tab $side="right">Object Settings</Tab>
            <Tab $side="right">Processor Settings</Tab>
            <Tab $on>Measurement View</Tab>
          </Tabs>
          <Content>
            <SubTabs>
              <SubTab $on>Frequency &amp; IFFT Response (SIM)</SubTab>
              <SubTab>Headroom</SubTab>
            </SubTabs>
            <Workspace>
              <ChartArea />
              <MeasurementSettings />
            </Workspace>
            <Traces />
          </Content>
          <StatusBar>
            <span>Hold Shift to pan, Space to orbit</span>
            <span>Mapp3D Writers Gala test :: Autosaved : 2008051034</span>
          </StatusBar>
        </Center>
        <SplitHandle />
        <ToolsPanel />
      </Body>
      <ScreenEdge />
    </Shell>
  );
}
